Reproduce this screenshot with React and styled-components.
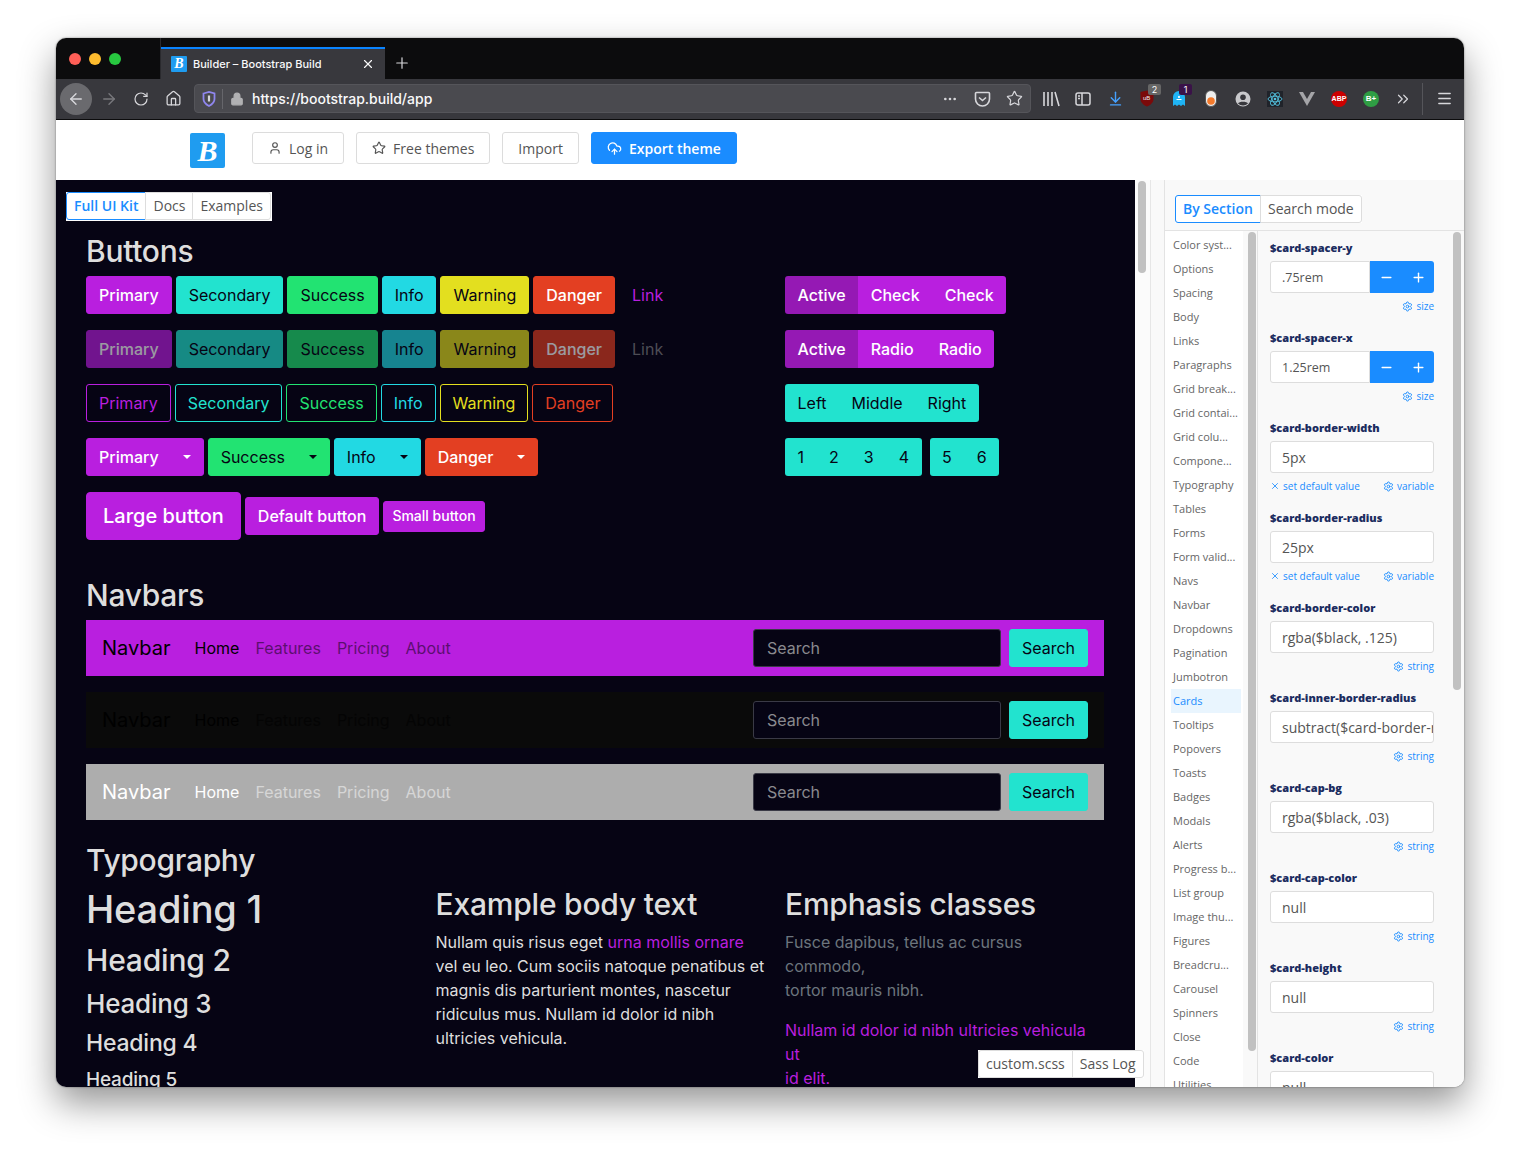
import React from 'react';
import styled, { createGlobalStyle } from 'styled-components';
import {
  ArrowLeft, ArrowRight, RotateCw, House, Lock, Star, ArrowDownToLine, Menu, ChevronsRight,
  X, Plus, Minus, Ellipsis, User, CloudUpload, Settings,
} from 'lucide-react';

const colors = {
  primary: '#b91fdf',
  secondary: '#22e3cf',
  success: '#22e372',
  info: '#22d9e3',
  warning: '#e3df1f',
  danger: '#e33f22',
};
const ink = '#060414';
const lightText = { primary: true, danger: true };

const GlobalStyle = createGlobalStyle`
  html, body { margin: 0; padding: 0; background: #fff; }
  * { box-sizing: border-box; }
`;

const Page = styled.div`
  width: 1520px;
  height: 1161px;
  padding: 38px 56px 74px;
  overflow: hidden;
  background: #fff;
`;

const BrowserWindow = styled.div`
  height: 1049px;
  display: flex;
  flex-direction: column;
  border-radius: 10px;
  overflow: hidden;
  box-shadow: 0 16px 36px rgba(0, 0, 0, 0.42), 0 0 2px rgba(0, 0, 0, 0.5);
`;

/* ---------- browser chrome ---------- */

const TabBar = styled.div`
  height: 41px;
  flex: none;
  display: flex;
  background: #0c0c0d;
`;

const Lights = styled.div`
  width: 105px;
  padding: 15px 0 0 13px;
  display: flex;
  gap: 8px;
  border-right: 1px solid #2a2a2e;
`;

const Light = styled.span`
  width: 12px;
  height: 12px;
  border-radius: 50%;
  background: ${(p) => p.$color};
`;

const Tab = styled.div`
  width: 224px;
  margin-top: 9px;
  display: flex;
  align-items: center;
  padding: 0 10px;
  gap: 6px;
  background: #38383d;
  border-top: 2px solid #0a84ff;
  color: #f9f9fa;
  font: 500 11px Inter, sans-serif;
`;

const Favicon = styled.span`
  width: 16px;
  height: 16px;
  border-radius: 1px;
  background: #1f9cf0;
  color: #fff;
  display: flex;
  align-items: center;
  justify-content: center;
  font: italic 700 14px "Liberation Serif", serif;
`;

const TabTitle = styled.span`
  flex: 1;
`;

const NewTab = styled.div`
  width: 34px;
  display: flex;
  align-items: center;
  justify-content: center;
  padding-top: 8px;
  color: #d7d7db;
`;

const Toolbar = styled.div`
  height: 41px;
  flex: none;
  display: flex;
  align-items: center;
  padding: 0 3px 1px 4px;
  background: #38383d;
  border-bottom: 1px solid #0c0c0d;
  color: #d7d7db;
`;

const BackCircle = styled.div`
  width: 32px;
  height: 32px;
  border-radius: 50%;
  background: #6a6a6e;
  display: flex;
  align-items: center;
  justify-content: center;
  margin-right: 1px;
`;

const NavIcon = styled.div`
  width: 32px;
  display: flex;
  justify-content: center;
  opacity: ${(p) => (p.$dim ? 0.4 : 1)};
`;

const UrlBar = styled.div`
  width: 837px;
  height: 29px;
  margin: 0 4px 0 5px;
  display: flex;
  align-items: center;
  background: #4a4a4f;
  border-radius: 4px;
  border: 1px solid #55555a;
  padding-left: 7px;
`;

const UrlDivider = styled.span`
  width: 1px;
  height: 20px;
  margin: 0 7px 0 6px;
  background: #66666b;
`;

const UrlText = styled.span`
  flex: 1;
  margin-left: 8px;
  color: #f9f9fa;
  font: 500 14px Inter, sans-serif;
`;

const ToolSlot = styled.div`
  width: 32px;
  height: 32px;
  position: relative;
  display: flex;
  align-items: center;
  justify-content: center;
`;

const Count = styled.span`
  position: absolute;
  top: 1px;
  left: ${(p) => p.$left}px;
  min-width: 13px;
  height: 11px;
  padding: 0 3px;
  border-radius: 2px;
  background: ${(p) => p.$bg};
  color: #fff;
  font: 9px/11px Inter, sans-serif;
  text-align: center;
`;

const RoundBadge = styled.span`
  width: 16px;
  height: 16px;
  border-radius: 50%;
  display: flex;
  align-items: center;
  justify-content: center;
  background: ${(p) => p.$bg};
  color: #fff;
  font: 700 ${(p) => p.$size}px "Liberation Sans", sans-serif;
`;

const ToolDivider = styled.span`
  width: 1px;
  height: 32px;
  margin: 0 5px 0 3px;
  background: #55555a;
`;

/* ---------- site header ---------- */

const SiteHeader = styled.header`
  height: 60px;
  flex: none;
  display: flex;
  align-items: flex-start;
  padding: 12px 0 0 134px;
  gap: 12px;
  background: #fff;
  font: 14px "Open Sans", sans-serif;
`;

const Logo = styled.div`
  width: 35px;
  height: 35px;
  margin: 1px 15px 0 0;
  border-radius: 2px;
  background: #1f9cf0;
  color: #fff;
  display: flex;
  align-items: center;
  justify-content: center;
  font: italic 700 30px "Liberation Serif", serif;
`;

const HeaderButton = styled.div`
  height: 32px;
  padding: 0 15px;
  display: flex;
  align-items: center;
  gap: 7px;
  border-radius: 3px;
  border: 1px solid ${(p) => (p.$solid ? '#1a8cff' : '#dcdcdc')};
  background: ${(p) => (p.$solid ? '#1a8cff' : '#fff')};
  color: ${(p) => (p.$solid ? '#fff' : '#555')};
  font-weight: ${(p) => (p.$solid ? 600 : 400)};
`;

/* ---------- main area ---------- */

const Workspace = styled.div`
  flex: 1;
  min-height: 0;
  display: flex;
  position: relative;
`;

const Preview = styled.main`
  width: 1079px;
  overflow: hidden;
  padding: 12px 0 0 10px;
  background: ${ink};
  color: #dedede;
  font: 16px/24px Inter, sans-serif;
`;

const SegmentGroup = styled.div`
  display: inline-flex;
  font: 14px/20px "Open Sans", sans-serif;
  background: #fff;
  padding: ${(p) => (p.$framed ? '0 1px 1px 0' : '0')};
`;

const Segment = styled.div`
  padding: 3px 7px;
  border: 1px solid ${(p) => (p.$active ? '#1a8cff' : '#ddd')};
  color: ${(p) => (p.$active ? '#1a8cff' : '#555')};
  font-weight: ${(p) => (p.$active ? 600 : 400)};
  margin-left: ${(p) => (p.$first ? 0 : -1)}px;
  background: #fff;
  &:first-child { border-radius: 3px 0 0 3px; }
  &:last-child { border-radius: 0 3px 3px 0; }
`;

const Sections = styled.div`
  padding: 11px 31px 0 20px;
`;

const SectionTitle = styled.h2`
  margin: ${(p) => p.$top}px 0 6px;
  font: 500 30px/38px Inter, sans-serif;
  letter-spacing: -0.3px;
`;

const ButtonGrid = styled.div`
  display: grid;
  grid-template-columns: 699px 1fr;
`;

const Stack = styled.div`
  display: flex;
  flex-direction: column;
  gap: 16px;
`;

const Row = styled.div`
  display: flex;
  align-items: center;
  gap: ${(p) => p.$gap ?? 4}px;
`;

const Btn = styled.div`
  display: flex;
  align-items: center;
  padding: 6px 12px;
  border: 1px solid ${(p) => colors[p.$tone] || 'transparent'};
  border-radius: 3px;
  height: 38px;
  background: ${(p) => (p.$outline ? 'transparent' : colors[p.$tone] || 'transparent')};
  color: ${(p) => {
    if (p.$outline) return colors[p.$tone];
    return lightText[p.$tone] ? '#fff' : ink;
  }};
  font-weight: ${(p) => (lightText[p.$tone] && !p.$outline ? 500 : 400)};
  opacity: ${(p) => (p.$disabled ? 0.6 : 1)};
`;

const SizedBtn = styled(Btn)`
  ${(p) => p.$size === 'lg' && 'height: 48px; padding: 0 16px; font-size: 20px; border-radius: 4px;'}
  ${(p) => p.$size === 'sm' && 'height: 31px; padding: 0 8px; font-size: 14px;'}
`;

const LinkBtn = styled.div`
  padding: 7px 13px;
  margin-left: 0;
  color: ${(p) => (p.$disabled ? '#4d4d55' : colors.primary)};
`;

const Caret = styled.span`
  margin-left: 24px;
  border-top: 4.5px solid currentColor;
  border-left: 4.5px solid transparent;
  border-right: 4.5px solid transparent;
`;

const Group = styled.div`
  display: flex;
  border-radius: 3px;
  overflow: hidden;
`;

const GroupBtn = styled.div`
  height: 38px;
  display: flex;
  align-items: center;
  padding: 0 ${(p) => p.$pad ?? 12.5}px;
  background: ${(p) => {
    if (p.$active) return '#9519b4';
    return colors[p.$tone];
  }};
  color: ${(p) => (p.$tone === 'primary' ? '#fff' : ink)};
  font-weight: ${(p) => (p.$tone === 'primary' ? 500 : 400)};
`;

const Navbar = styled.nav`
  height: 56px;
  margin-bottom: 16px;
  padding: 0 16px;
  display: flex;
  align-items: center;
  background: ${(p) => p.$bg};
  color: ${(p) => (p.$light ? '#fff' : '#000')};
`;

const Brand = styled.span`
  font-size: 20px;
  font-weight: 400;
  margin-right: 24px;
  ${(p) => p.$hidden && 'opacity: 0.95;'}
`;

const NavLink = styled.span`
  margin-right: 16px;
  opacity: ${(p) => (p.$active ? 1 : 0.5)};
`;

const SearchForm = styled.div`
  margin-left: auto;
  display: flex;
  gap: 8px;
`;

const SearchInput = styled.div`
  width: 248px;
  height: 38px;
  padding: 6px 13px;
  background: ${ink};
  border: 1px solid #3a3a46;
  border-radius: 3px;
  color: #8a8a8f;
`;

const TypeGrid = styled.div`
  display: grid;
  grid-template-columns: 349.5px 349.5px 1fr;
`;

const Heading = styled.div`
  font-weight: 500;
  font-size: ${(p) => p.$size}px;
  line-height: ${(p) => p.$line}px;
  margin-bottom: ${(p) => p.$gap ?? 8}px;
  letter-spacing: -0.2px;
`;

const Para = styled.p`
  margin: 0 0 16px;
  color: ${(p) => p.$color || '#dedede'};
`;

const Accent = styled.span`
  color: ${colors.primary};
`;

const LogTabs = styled.div`
  position: absolute;
  left: 922px;
  bottom: 9px;
  z-index: 2;
`;

/* ---------- scrollbars ---------- */

const Gutter = styled.div`
  width: ${(p) => p.$width}px;
  flex: none;
  background: ${(p) => p.$bg || '#fbfbfb'};
  padding: 1px 0 0 ${(p) => p.$inset}px;
  ${(p) => p.$line && `border-right: 1px solid ${p.$line};`}
`;

const Thumb = styled.div`
  width: 8px;
  height: ${(p) => p.$height}px;
  border-radius: 4px;
  background: #c1c1c1;
`;

const Strip = styled.div`
  width: 15px;
  flex: none;
  background: #f9f9f9;
  border-left: 1px solid #e6e6e6;
  border-right: 1px solid #e3e3e3;
`;

/* ---------- theme panel ---------- */

const Panel = styled.aside`
  flex: 1;
  min-width: 0;
  display: flex;
  flex-direction: column;
  background: #f9f9f9;
  font-family: "Open Sans", sans-serif;
  overflow: hidden;
`;

const PanelHead = styled.div`
  height: 51px;
  flex: none;
  padding: 15px 0 0 10px;
  border-bottom: 1px solid #e3e3e3;
`;

const PanelBody = styled.div`
  flex: 1;
  min-height: 0;
  display: flex;
`;

const SideNav = styled.div`
  width: 78px;
  flex: none;
  padding: 2px 2px 0 6px;
  background: #fff;
  overflow: hidden;
`;

const SideItem = styled.div`
  height: 24px;
  padding-left: 2px;
  margin-right: 0;
  font-size: 11px;
  line-height: 24px;
  white-space: nowrap;
  color: ${(p) => (p.$active ? '#1a8cff' : '#666')};
  background: ${(p) => (p.$active ? '#e9f5fe' : 'transparent')};
`;

const Vars = styled.div`
  width: 191px;
  flex: none;
  padding: 9px 15px 0 12px;
  overflow: hidden;
`;

const Field = styled.div`
  height: 90px;
`;

const FieldLabel = styled.div`
  height: 16px;
  margin-bottom: 5px;
  font-size: 11px;
  font-weight: 800;
  line-height: 16px;
  color: #1b2c5f;
`;

const InputRow = styled.div`
  display: flex;
  height: 32px;
`;

const ValueBox = styled.div`
  flex: 1;
  min-width: 0;
  padding: 0 0 0 11px;
  display: flex;
  align-items: center;
  white-space: nowrap;
  overflow: hidden;
  background: #fff;
  border: 1px solid #ddd;
  border-radius: ${(p) => (p.$stepper ? '3px 0 0 3px' : '3px')};
  color: #555;
  font-size: ${(p) => (p.$stepper ? 12.5 : 14)}px;
`;

const StepBtn = styled.div`
  width: 32px;
  display: flex;
  align-items: center;
  justify-content: center;
  background: #1a8cff;
  color: #fff;
  &:first-of-type { border-right: 1px solid #4ea6ff; }
  &:last-child { border-radius: 0 3px 3px 0; }
`;

const Hints = styled.div`
  height: 18px;
  margin-top: 4px;
  display: flex;
  justify-content: ${(p) => (p.$both ? 'space-between' : 'flex-end')};
  color: #1a8cff;
  font-size: 10px;
  line-height: 18px;
`;

const Hint = styled.span`
  display: inline-flex;
  align-items: center;
  gap: 3px;
`;

const sections = [
  'Color syst...', 'Options', 'Spacing', 'Body', 'Links', 'Paragraphs', 'Grid break...', 'Grid contai...',
  'Grid colu...', 'Compone...', 'Typography', 'Tables', 'Forms', 'Form valid...', 'Navs', 'Navbar', 'Dropdowns',
  'Pagination', 'Jumbotron', 'Cards', 'Tooltips', 'Popovers', 'Toasts', 'Badges', 'Modals', 'Alerts',
  'Progress b...', 'List group', 'Image thu...', 'Figures', 'Breadcru...', 'Carousel', 'Spinners', 'Close',
  'Code', 'Utilities',
];

const fields = [
  { name: '$card-spacer-y', value: '.75rem', kind: 'size' },
  { name: '$card-spacer-x', value: '1.25rem', kind: 'size' },
  { name: '$card-border-width', value: '5px', kind: 'variable' },
  { name: '$card-border-radius', value: '25px', kind: 'variable' },
  { name: '$card-border-color', value: 'rgba($black, .125)', kind: 'string' },
  { name: '$card-inner-border-radius', value: 'subtract($card-border-radius', kind: 'string' },
  { name: '$card-cap-bg', value: 'rgba($black, .03)', kind: 'string' },
  { name: '$card-cap-color', value: 'null', kind: 'string' },
  { name: '$card-height', value: 'null', kind: 'string' },
  { name: '$card-color', value: 'null', kind: 'string' },
];

const solidRow = [
  ['primary', 'Primary'], ['secondary', 'Secondary'], ['success', 'Success'],
  ['info', 'Info'], ['warning', 'Warning'], ['danger', 'Danger'],
];

// little extension / toolbar drawings
const Library = () => (
  <svg width="18" height="16" viewBox="0 0 18 16" fill="none" stroke="currentColor" strokeWidth="1.6">
    <path d="M2 1v14M6 1v14M10 1v14M13 1l4 14" />
  </svg>
);
const SidebarIcon = () => (
  <svg width="16" height="14" viewBox="0 0 16 14" fill="none" stroke="currentColor" strokeWidth="1.5">
    <rect x="1" y="1" width="14" height="12" rx="2" />
    <path d="M7 1v12M3 4h2M3 6.5h2" />
  </svg>
);
const Pocket = () => (
  <svg width="17" height="16" viewBox="0 0 17 16" fill="none" stroke="currentColor" strokeWidth="1.6">
    <path d="M1.5 2.5a1 1 0 0 1 1-1h12a1 1 0 0 1 1 1V8a7 7 0 0 1-14 0z" />
    <path d="M5 6.5l3.5 3 3.5-3" />
  </svg>
);
const ShieldIcon = () => (
  <svg width="14" height="16" viewBox="0 0 14 16" fill="none">
    <path d="M1.5 2.5L7 1l5.5 1.5V8c0 3.2-2.4 5.4-5.5 7C3.900 13.400 1.500 11.200 1.500 8z" stroke="#8f86ee" strokeWidth="1.8" />
    <path d="M7 4.500v6" stroke="#d7d7db" strokeWidth="2.200" />
  </svg>
);
const UBlock = () => (
  <svg width="14" height="17" viewBox="0 0 14 17">
    <path d="M0.500 2L7 0.500 13.500 2v7c0 3.500-3 6-6.500 7.500C3.500 15 0.500 12.500 0.500 9z" fill="#7b0a0a" />
    <text x="3" y="10" fontSize="6" fill="#eee" fontFamily="Liberation Sans">uB</text>
  </svg>
);
const Ghost = () => (
  <svg width="14" height="17" viewBox="0 0 14 17">
    <path d="M1 7a6 6 0 0 1 12 0v9l-2-1.500L9 16l-2-1.500L5 16l-2-1.500L1 16z" fill="#1fb4f5" />
    <circle cx="7" cy="7" r="1.100" fill="#fff" />
    <path d="M4.500 9.500h5" stroke="#fff" strokeWidth="1" />
  </svg>
);
const Pill = () => (
  <svg width="12" height="17" viewBox="0 0 12 17">
    <rect x="0.500" y="0.500" width="11" height="16" rx="5.500" fill="#eee" stroke="#555" />
    <circle cx="6" cy="11" r="3.800" fill="#f47a2c" />
  </svg>
);
const Account = () => (
  <svg width="16" height="16" viewBox="0 0 16 16">
    <circle cx="8" cy="8" r="7.500" fill="#c9c9cc" />
    <circle cx="8" cy="6.300" r="2.800" fill="#38383d" />
    <path d="M3 12.500c1-2.500 9-2.500 10 0a7 7 0 0 1-10 0z" fill="#38383d" />
  </svg>
);
const ReactIcon = () => (
  <svg width="16" height="16" viewBox="0 0 16 16" fill="none" stroke="#53c1de" strokeWidth="0.900" style={{ background: '#20232a' }}>
    <circle cx="8" cy="8" r="1.300" fill="#53c1de" stroke="none" />
    <ellipse cx="8" cy="8" rx="7" ry="2.800" />
    <ellipse cx="8" cy="8" rx="7" ry="2.800" transform="rotate(60 8 8)" />
    <ellipse cx="8" cy="8" rx="7" ry="2.800" transform="rotate(120 8 8)" />
  </svg>
);
const VueIcon = () => (
  <svg width="16" height="14" viewBox="0 0 16 14">
    <path d="M0 0h16L8 14z" fill="#a5a5a8" />
    <path d="M4 0h8L8 7z" fill="#38383d" />
  </svg>
);

const App = () => (
  <Page>
    <GlobalStyle />
    <BrowserWindow>
      <TabBar>
        <Lights>
          <Light $color="#ff5f57" />
          <Light $color="#febc2e" />
          <Light $color="#28c840" />
        </Lights>
        <Tab>
          <Favicon>B</Favicon>
          <TabTitle>Builder – Bootstrap Build</TabTitle>
          <X size={14} strokeWidth={2} />
        </Tab>
        <NewTab><Plus size={18} strokeWidth={1.6} /></NewTab>
      </TabBar>

      <Toolbar>
        <BackCircle><ArrowLeft size={18} strokeWidth={1.8} /></BackCircle>
        <NavIcon $dim><ArrowRight size={18} strokeWidth={1.8} /></NavIcon>
        <NavIcon><RotateCw size={16} strokeWidth={1.8} /></NavIcon>
        <NavIcon><House size={17} strokeWidth={1.8} /></NavIcon>
        <UrlBar>
          <ShieldIcon />
          <UrlDivider />
          <Lock size={14} fill="#b1b1b3" color="#b1b1b3" />
          <UrlText>https://bootstrap.build/app</UrlText>
          <ToolSlot><Ellipsis size={16} /></ToolSlot>
          <ToolSlot><Pocket /></ToolSlot>
          <ToolSlot><Star size={17} strokeWidth={1.7} /></ToolSlot>
        </UrlBar>
        <ToolSlot><Library /></ToolSlot>
        <ToolSlot><SidebarIcon /></ToolSlot>
        <ToolSlot><ArrowDownToLine size={17} color="#45a1ff" strokeWidth={2} /></ToolSlot>
        <ToolSlot><UBlock /><Count $left={17} $bg="#666">2</Count></ToolSlot>
        <ToolSlot><Ghost /><Count $left={16} $bg="#3a1248">1</Count></ToolSlot>
        <ToolSlot><Pill /></ToolSlot>
        <ToolSlot><Account /></ToolSlot>
        <ToolSlot><ReactIcon /></ToolSlot>
        <ToolSlot><VueIcon /></ToolSlot>
        <ToolSlot><RoundBadge $bg="#c00" $size={7}>ABP</RoundBadge></ToolSlot>
        <ToolSlot><RoundBadge $bg="#2f9e44" $size={8}>B+</RoundBadge></ToolSlot>
        <ToolSlot><ChevronsRight size={18} strokeWidth={1.6} /></ToolSlot>
        <ToolDivider />
        <ToolSlot><Menu size={17} /></ToolSlot>
      </Toolbar>

      <SiteHeader>
        <Logo>B</Logo>
        <HeaderButton><User size={14} />Log in</HeaderButton>
        <HeaderButton><Star size={14} />Free themes</HeaderButton>
        <HeaderButton>Import</HeaderButton>
        <HeaderButton $solid><CloudUpload size={15} />Export theme</HeaderButton>
      </SiteHeader>

      <Workspace>
        <Preview>
          <SegmentGroup $framed>
            <Segment $active $first>Full UI Kit</Segment>
            <Segment>Docs</Segment>
            <Segment>Examples</Segment>
          </SegmentGroup>

          <Sections>
            <SectionTitle $top={0}>Buttons</SectionTitle>
            <ButtonGrid>
              <Stack>
                <Row>
                  {solidRow.map(([tone, label]) => <Btn key={tone} $tone={tone}>{label}</Btn>)}
                  <LinkBtn>Link</LinkBtn>
                </Row>
                <Row>
                  {solidRow.map(([tone, label]) => <Btn key={tone} $tone={tone} $disabled>{label}</Btn>)}
                  <LinkBtn $disabled>Link</LinkBtn>
                </Row>
                <Row>
                  {solidRow.map(([tone, label]) => <Btn key={tone} $tone={tone} $outline>{label}</Btn>)}
                </Row>
                <Row>
                  <Btn $tone="primary">Primary<Caret /></Btn>
                  <Btn $tone="success">Success<Caret /></Btn>
                  <Btn $tone="info">Info<Caret /></Btn>
                  <Btn $tone="danger">Danger<Caret /></Btn>
                </Row>
                <Row>
                  <SizedBtn $tone="primary" $size="lg">Large button</SizedBtn>
                  <SizedBtn $tone="primary">Default button</SizedBtn>
                  <SizedBtn $tone="primary" $size="sm">Small button</SizedBtn>
                </Row>
              </Stack>
              <Stack>
                <Row>
                  <Group>
                    <GroupBtn $tone="primary" $active>Active</GroupBtn>
                    <GroupBtn $tone="primary">Check</GroupBtn>
                    <GroupBtn $tone="primary">Check</GroupBtn>
                  </Group>
                </Row>
                <Row>
                  <Group>
                    <GroupBtn $tone="primary" $active>Active</GroupBtn>
                    <GroupBtn $tone="primary">Radio</GroupBtn>
                    <GroupBtn $tone="primary">Radio</GroupBtn>
                  </Group>
                </Row>
                <Row>
                  <Group>
                    <GroupBtn $tone="secondary">Left</GroupBtn>
                    <GroupBtn $tone="secondary">Middle</GroupBtn>
                    <GroupBtn $tone="secondary">Right</GroupBtn>
                  </Group>
                </Row>
                <Row $gap={8}>
                  <Group>
                    {[1, 2, 3, 4].map((n) => <GroupBtn key={n} $tone="secondary">{n}</GroupBtn>)}
                  </Group>
                  <Group>
                    {[5, 6].map((n) => <GroupBtn key={n} $tone="secondary">{n}</GroupBtn>)}
                  </Group>
                </Row>
              </Stack>
            </ButtonGrid>

            <SectionTitle $top={36}>Navbars</SectionTitle>
            {[
              { bg: colors.primary, light: false },
              { bg: '#0a0a0a', light: false },
              { bg: '#adadad', light: true },
            ].map((bar) => (
              <Navbar key={bar.bg} $bg={bar.bg} $light={bar.light}>
                <Brand>Navbar</Brand>
                <NavLink $active>Home</NavLink>
                <NavLink>Features</NavLink>
                <NavLink>Pricing</NavLink>
                <NavLink>About</NavLink>
                <SearchForm>
                  <SearchInput>Search</SearchInput>
                  <Btn $tone="secondary">Search</Btn>
                </SearchForm>
              </Navbar>
            ))}

            <SectionTitle $top={21}>Typography</SectionTitle>
            <TypeGrid>
              <div>
                <Heading $size={38} $line={48}>Heading 1</Heading>
                <Heading $size={30} $line={38}>Heading 2</Heading>
                <Heading $size={26} $line={34}>Heading 3</Heading>
                <Heading $size={23} $line={29} $gap={10}>Heading 4</Heading>
                <Heading $size={19} $line={24}>Heading 5</Heading>
              </div>
              <div>
                <Heading $size={30} $line={38} $gap={7}>Example body text</Heading>
                <Para>
                  Nullam quis risus eget <Accent>urna mollis ornare</Accent><br />
                  vel eu leo. Cum sociis natoque penatibus et<br />
                  magnis dis parturient montes, nascetur<br />
                  ridiculus mus. Nullam id dolor id nibh<br />
                  ultricies vehicula.
                </Para>
              </div>
              <div>
                <Heading $size={30} $line={38} $gap={7}>Emphasis classes</Heading>
                <Para $color="#6c757d">Fusce dapibus, tellus ac cursus commodo,<br />tortor mauris nibh.</Para>
                <Para $color={colors.primary}>Nullam id dolor id nibh ultricies vehicula ut<br />id elit.</Para>
                <Para $color={colors.secondary}>Pellentesque ornare sem lacinia quam</Para>
              </div>
            </TypeGrid>
          </Sections>
        </Preview>

        <LogTabs>
          <SegmentGroup>
            <Segment $first>custom.scss</Segment>
            <Segment>Sass Log</Segment>
          </SegmentGroup>
        </LogTabs>

        <Gutter $width={15} $inset={3}><Thumb $height={92} /></Gutter>
        <Strip />

        <Panel>
          <PanelHead>
            <SegmentGroup>
              <Segment $active $first>By Section</Segment>
              <Segment>Search mode</Segment>
            </SegmentGroup>
          </PanelHead>
          <PanelBody>
            <SideNav>
              {sections.map((s) => <SideItem key={s} $active={s === 'Cards'}>{s}</SideItem>)}
            </SideNav>
            <Gutter $width={15} $inset={5} $bg="#f9f9f9" $line="#e3e3e3"><Thumb $height={819} /></Gutter>
            <Vars>
              {fields.map((f) => (
                <Field key={f.name}>
                  <FieldLabel>{f.name}</FieldLabel>
                  <InputRow>
                    <ValueBox $stepper={f.kind === 'size'}>{f.value}</ValueBox>
                    {f.kind === 'size' && <StepBtn><Minus size={15} strokeWidth={2.2} /></StepBtn>}
                    {f.kind === 'size' && <StepBtn><Plus size={15} strokeWidth={2.2} /></StepBtn>}
                  </InputRow>
                  <Hints $both={f.kind === 'variable'}>
                    {f.kind === 'variable' && <Hint><X size={10} />set default value</Hint>}
                    <Hint><Settings size={11} />{f.kind}</Hint>
                  </Hints>
                </Field>
              ))}
            </Vars>
            <Gutter $width={15} $inset={4} $bg="#f9f9f9"><Thumb $height={458} /></Gutter>
          </PanelBody>
        </Panel>
      </Workspace>
    </BrowserWindow>
  </Page>
);

export default App;
